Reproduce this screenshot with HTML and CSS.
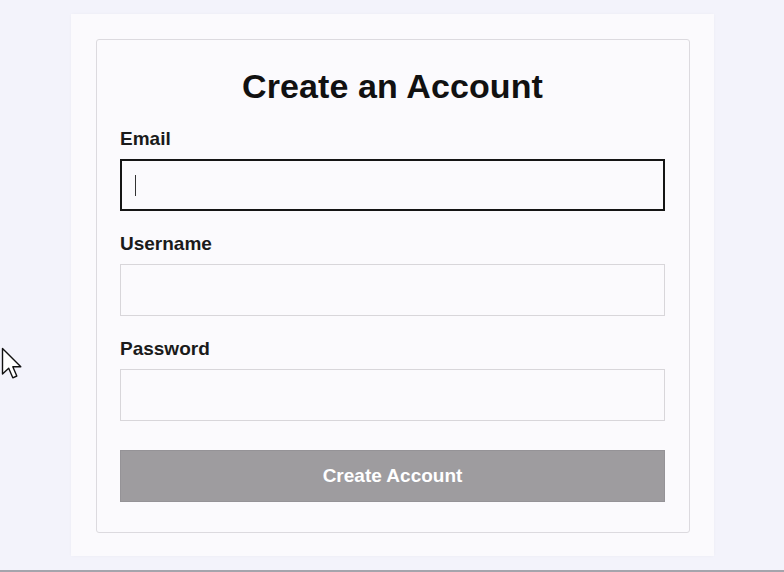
FILE: index.html
```html
<!DOCTYPE html>
<html lang="en">
<head>
    <meta charset="UTF-8">
    <title>Create an Account</title>
    <link rel="stylesheet" href="styles.css">
</head>
<body>
    <div class="page">
        <div class="outer">
            <form class="signup">
                <h2>Create an Account</h2>

                <div class="form-group">
                    <label for="email">Email</label>
                    <div class="field">
                        <input type="email" id="email" class="focused">
                        <span class="caret"></span>
                    </div>
                </div>

                <div class="form-group">
                    <label for="username">Username</label>
                    <input type="text" id="username">
                </div>

                <div class="form-group">
                    <label for="password">Password</label>
                    <input type="password" id="password">
                </div>

                <button type="submit" disabled>Create Account</button>
            </form>
        </div>

        <svg class="pointer" width="26" height="34" viewBox="0 0 26 34">
            <path d="M2.5 1.5 L2.5 27 L8.7 21.3 L12.8 30.8 L16.8 29 L12.8 19.8 L20.8 19.8 Z" fill="#fff" stroke="#111" stroke-width="1.4" stroke-linejoin="round"/>
        </svg>
    </div>
</body>
</html>
```

FILE: styles.css
```css
body {
    font-family: "Liberation Sans", Arial, sans-serif;
    margin: 0;
    padding: 0;
    background-color: #f3f3fb;
}

.page {
    position: relative;
    height: 572px;
    padding: 14px 0 0 71px;
    box-sizing: border-box;
    border-bottom: 2px solid #a4a4ac;
}

.outer {
    width: 643px;
    height: 542px;
    box-sizing: border-box;
    padding: 25px 24px 25px 25px;
    background-color: #fbfafd;
    box-shadow: 0 0 3px rgba(0, 0, 0, 0.03);
}

.signup {
    width: 594px;
    height: 494px;
    box-sizing: border-box;
    padding: 27px 24px 30px 23px;
    border: 1px solid #dcdadf;
    border-radius: 3px;
    background-color: #fbfafd;
}

h2 {
    text-align: center;
    font-size: 34px;
    line-height: 39px;
    margin: 0 0 22px;
    color: #111;
    letter-spacing: 0.1px;
}

label {
    display: block;
    font-size: 19px;
    line-height: 22px;
    font-weight: bold;
    color: #1a1a1a;
    margin-bottom: 9px;
}

.form-group {
    margin-bottom: 22px;
}

input {
    display: block;
    width: 100%;
    height: 52px;
    box-sizing: border-box;
    margin: 0;
    padding: 0 14px;
    font-size: 18px;
    font-family: inherit;
    border: 1px solid #d8d6da;
    border-radius: 0;
    background-color: #fbfafd;
    outline: none;
}

input.focused {
    border: 2px solid #151515;
}

.field {
    position: relative;
}

.caret {
    position: absolute;
    left: 15px;
    top: 16px;
    width: 1px;
    height: 21px;
    background-color: #333;
}

button {
    display: block;
    width: 100%;
    height: 52px;
    margin-top: 29px;
    font-family: inherit;
    font-size: 19px;
    font-weight: bold;
    color: #fff;
    background-color: #9e9c9f;
    border: 1px solid #959397;
    border-radius: 0;
}

.pointer {
    position: absolute;
    left: 0;
    top: 347px;
}
```
